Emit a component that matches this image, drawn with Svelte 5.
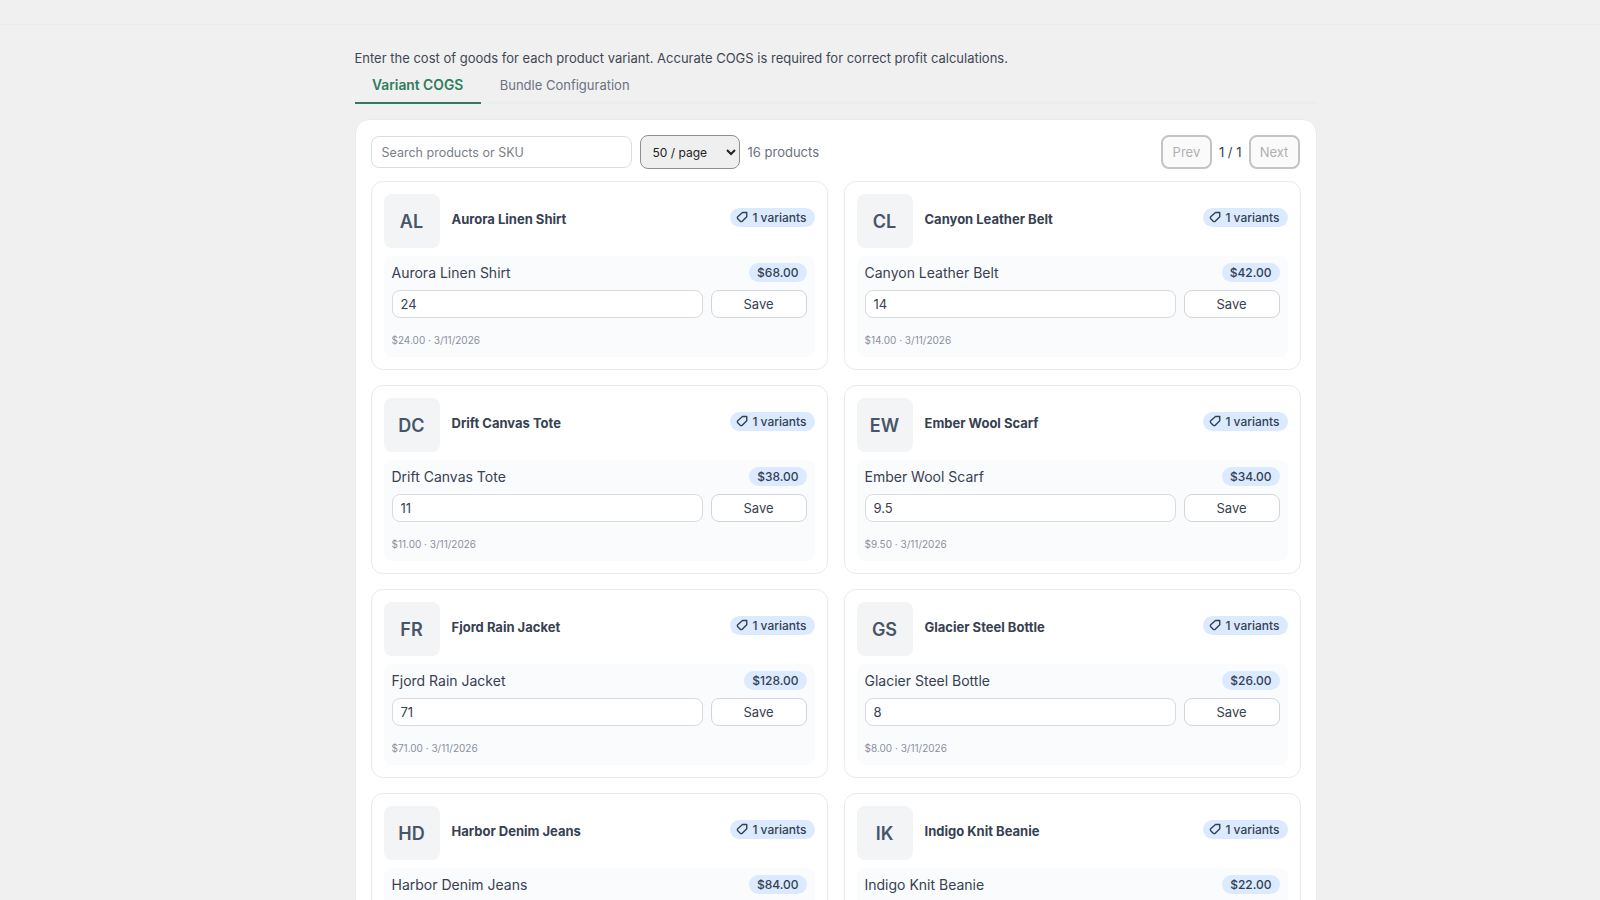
<script>
  const products = [
    { initials: "AL", name: "Aurora Linen Shirt", price: "$68.00", cogs: "24", cost: "$24.00" },
    { initials: "CL", name: "Canyon Leather Belt", price: "$42.00", cogs: "14", cost: "$14.00" },
    { initials: "DC", name: "Drift Canvas Tote", price: "$38.00", cogs: "11", cost: "$11.00" },
    { initials: "EW", name: "Ember Wool Scarf", price: "$34.00", cogs: "9.5", cost: "$9.50" },
    { initials: "FR", name: "Fjord Rain Jacket", price: "$128.00", cogs: "71", cost: "$71.00" },
    { initials: "GS", name: "Glacier Steel Bottle", price: "$26.00", cogs: "8", cost: "$8.00" },
    { initials: "HD", name: "Harbor Denim Jeans", price: "$84.00", cogs: "46", cost: "$46.00" },
    { initials: "IK", name: "Indigo Knit Beanie", price: "$22.00", cogs: "7", cost: "$7.00" }
  ];
</script>

<div class="page">
  <div class="topbar"></div>
  <main class="content">
    <p class="intro">Enter the cost of goods for each product variant. Accurate COGS is required for correct profit calculations.</p>
    <div class="tabs">
      <button class="tab active">Variant COGS</button>
      <button class="tab">Bundle Configuration</button>
    </div>
    <section class="panel">
      <div class="toolbar">
        <input class="search" placeholder="Search products or SKU" />
        <select class="perpage">
          <option>50 / page</option>
        </select>
        <span class="count">16 products</span>
        <div class="pager">
          <button class="pagebtn" disabled>Prev</button>
          <span class="pagenum">1 / 1</span>
          <button class="pagebtn" disabled>Next</button>
        </div>
      </div>
      <div class="grid">
        {#each products as p}
          <article class="card">
            <header class="cardhead">
              <div class="thumb">{p.initials}</div>
              <div class="title">{p.name}</div>
              <span class="badge">
                <svg width="12" height="12" viewBox="0 0 24 24" fill="none" stroke="currentColor" stroke-width="2.8" stroke-linecap="round" stroke-linejoin="round">
                  <path d="M21.5 3 H13 L3.5 11.5 a2.8 2.8 0 0 0 0 4 l5 5 a2.8 2.8 0 0 0 4 0 L21.5 11.5 Z" />
                </svg>
                1 variants
              </span>
            </header>
            <div class="variant">
              <div class="varianthead">
                <span class="vname">{p.name}</span>
                <span class="price">{p.price}</span>
              </div>
              <div class="editrow">
                <input class="cogs" value={p.cogs} />
                <button class="save">Save</button>
              </div>
              <div class="meta">{p.cost} · 3/11/2026</div>
            </div>
          </article>
        {/each}
      </div>
    </section>
  </main>
</div>

<style>
  :global(body) {
    background: #f0f0f0;
    font-family: Inter, "Noto Sans", sans-serif;
    color: #1f2937;
  }

  .page {
    box-sizing: border-box;
    height: 900px;
    overflow: hidden;
    padding-left: 71px;
  }

  .topbar {
    height: 24px;
    margin-left: -71px;
    border-bottom: 1px solid #ebebeb;
  }

  .content {
    width: 962px;
    margin: 0 auto;
    padding: 25px 0 0;
  }

  .intro {
    margin: 0;
    font-size: 13px;
    line-height: 16px;
    color: #3f4754;
  }

  .tabs {
    display: flex;
    gap: 1.5px;
    height: 34px;
    margin-top: 2px;
    border-bottom: 2px solid #e9eef3;
  }

  .tab {
    border: 0;
    background: none;
    padding: 0 17.5px;
    height: 36px;
    font: inherit;
    font-size: 13px;
    color: #6b7280;
    border-bottom: 2px solid transparent;
  }

  .tab.active {
    color: #2f7d5d;
    font-size: 13.8px;
    font-weight: 600;
    border-bottom-color: #2f7d5d;
  }

  .panel {
    margin-top: 15px;
    background: #fff;
    border: 1px solid #e7eaee;
    border-radius: 14px;
    padding: 15px;
  }

  .toolbar {
    display: flex;
    align-items: center;
    height: 34px;
  }

  .search {
    box-sizing: border-box;
    width: 261px;
    height: 32px;
    border: 1px solid #d9dee6;
    border-radius: 8px;
    padding: 0 10px;
    font: inherit;
    font-size: 12.5px;
    outline: none;
  }

  .search::placeholder {
    color: #7b8087;
  }

  .perpage {
    box-sizing: border-box;
    width: 100px;
    height: 34px;
    margin-left: 8px;
    border: 1px solid #8f8f8f;
    border-radius: 8px;
    padding: 0 8px;
    background: #efefef;
    font: inherit;
    font-size: 12px;
    color: #222;
  }

  .count {
    margin-left: 8px;
    font-size: 13px;
    color: #6b7280;
  }

  .pager {
    margin: 0 1px 0 auto;
    display: flex;
    align-items: center;
    gap: 7px;
  }

  .pagebtn {
    box-sizing: border-box;
    width: 51px;
    height: 34px;
    border: 2px solid #c4c4c4;
    border-radius: 8px;
    background: #fafafa;
    font: inherit;
    font-size: 13px;
    color: #b0b0b0;
  }

  .pagenum {
    font-size: 13px;
    color: #374151;
  }

  .grid {
    display: grid;
    grid-template-columns: 1fr 1fr;
    gap: 15px 16px;
    margin-top: 12px;
  }

  .card {
    box-sizing: border-box;
    height: 189px;
    border: 1px solid #e7ebf0;
    border-radius: 12px;
    padding: 12px;
  }

  .cardhead {
    display: flex;
    align-items: center;
    height: 54px;
  }

  .thumb {
    width: 56px;
    height: 54px;
    border-radius: 8px;
    background: #f3f4f6;
    display: flex;
    align-items: center;
    justify-content: center;
    font-size: 18px;
    font-weight: 600;
    color: #475569;
  }

  .title {
    margin: -5px 0 0 12px;
    font-size: 13px;
    font-weight: 700;
    color: #374151;
    flex: 1;
  }

  .badge {
    display: inline-flex;
    align-items: center;
    gap: 4px;
    height: 19px;
    padding: 0 8px 0 6.5px;
    margin-top: -8px;
    border-radius: 10px;
    background: #dbeafe;
    font-size: 12px;
    font-weight: 500;
    color: #334155;
  }

  .variant {
    margin-top: 8px;
    height: 101px;
    box-sizing: border-box;
    padding: 7px 8px 0;
    border-radius: 8px;
    background: #fafbfd;
  }

  .varianthead {
    display: flex;
    justify-content: space-between;
    align-items: center;
    height: 19px;
  }

  .vname {
    font-size: 14px;
    color: #374151;
  }

  .price {
    padding: 0 8px;
    height: 19px;
    line-height: 19px;
    border-radius: 10px;
    background: #dbeafe;
    font-size: 12px;
    font-weight: 500;
    color: #334155;
  }

  .editrow {
    display: flex;
    gap: 8px;
    margin-top: 8px;
  }

  .cogs {
    box-sizing: border-box;
    flex: 1;
    min-width: 0;
    height: 28px;
    border: 1px solid #d9dbe0;
    border-radius: 8px;
    padding: 0 8px;
    font: inherit;
    font-size: 13px;
    color: #374151;
    outline: none;
  }

  .save {
    box-sizing: border-box;
    width: 96px;
    height: 28px;
    border: 1px solid #d3d5da;
    border-radius: 8px;
    background: #fff;
    font: inherit;
    font-size: 13px;
    color: #374151;
  }

  .meta {
    margin-top: 16px;
    font-size: 10px;
    color: #8a90a0;
  }
</style>
